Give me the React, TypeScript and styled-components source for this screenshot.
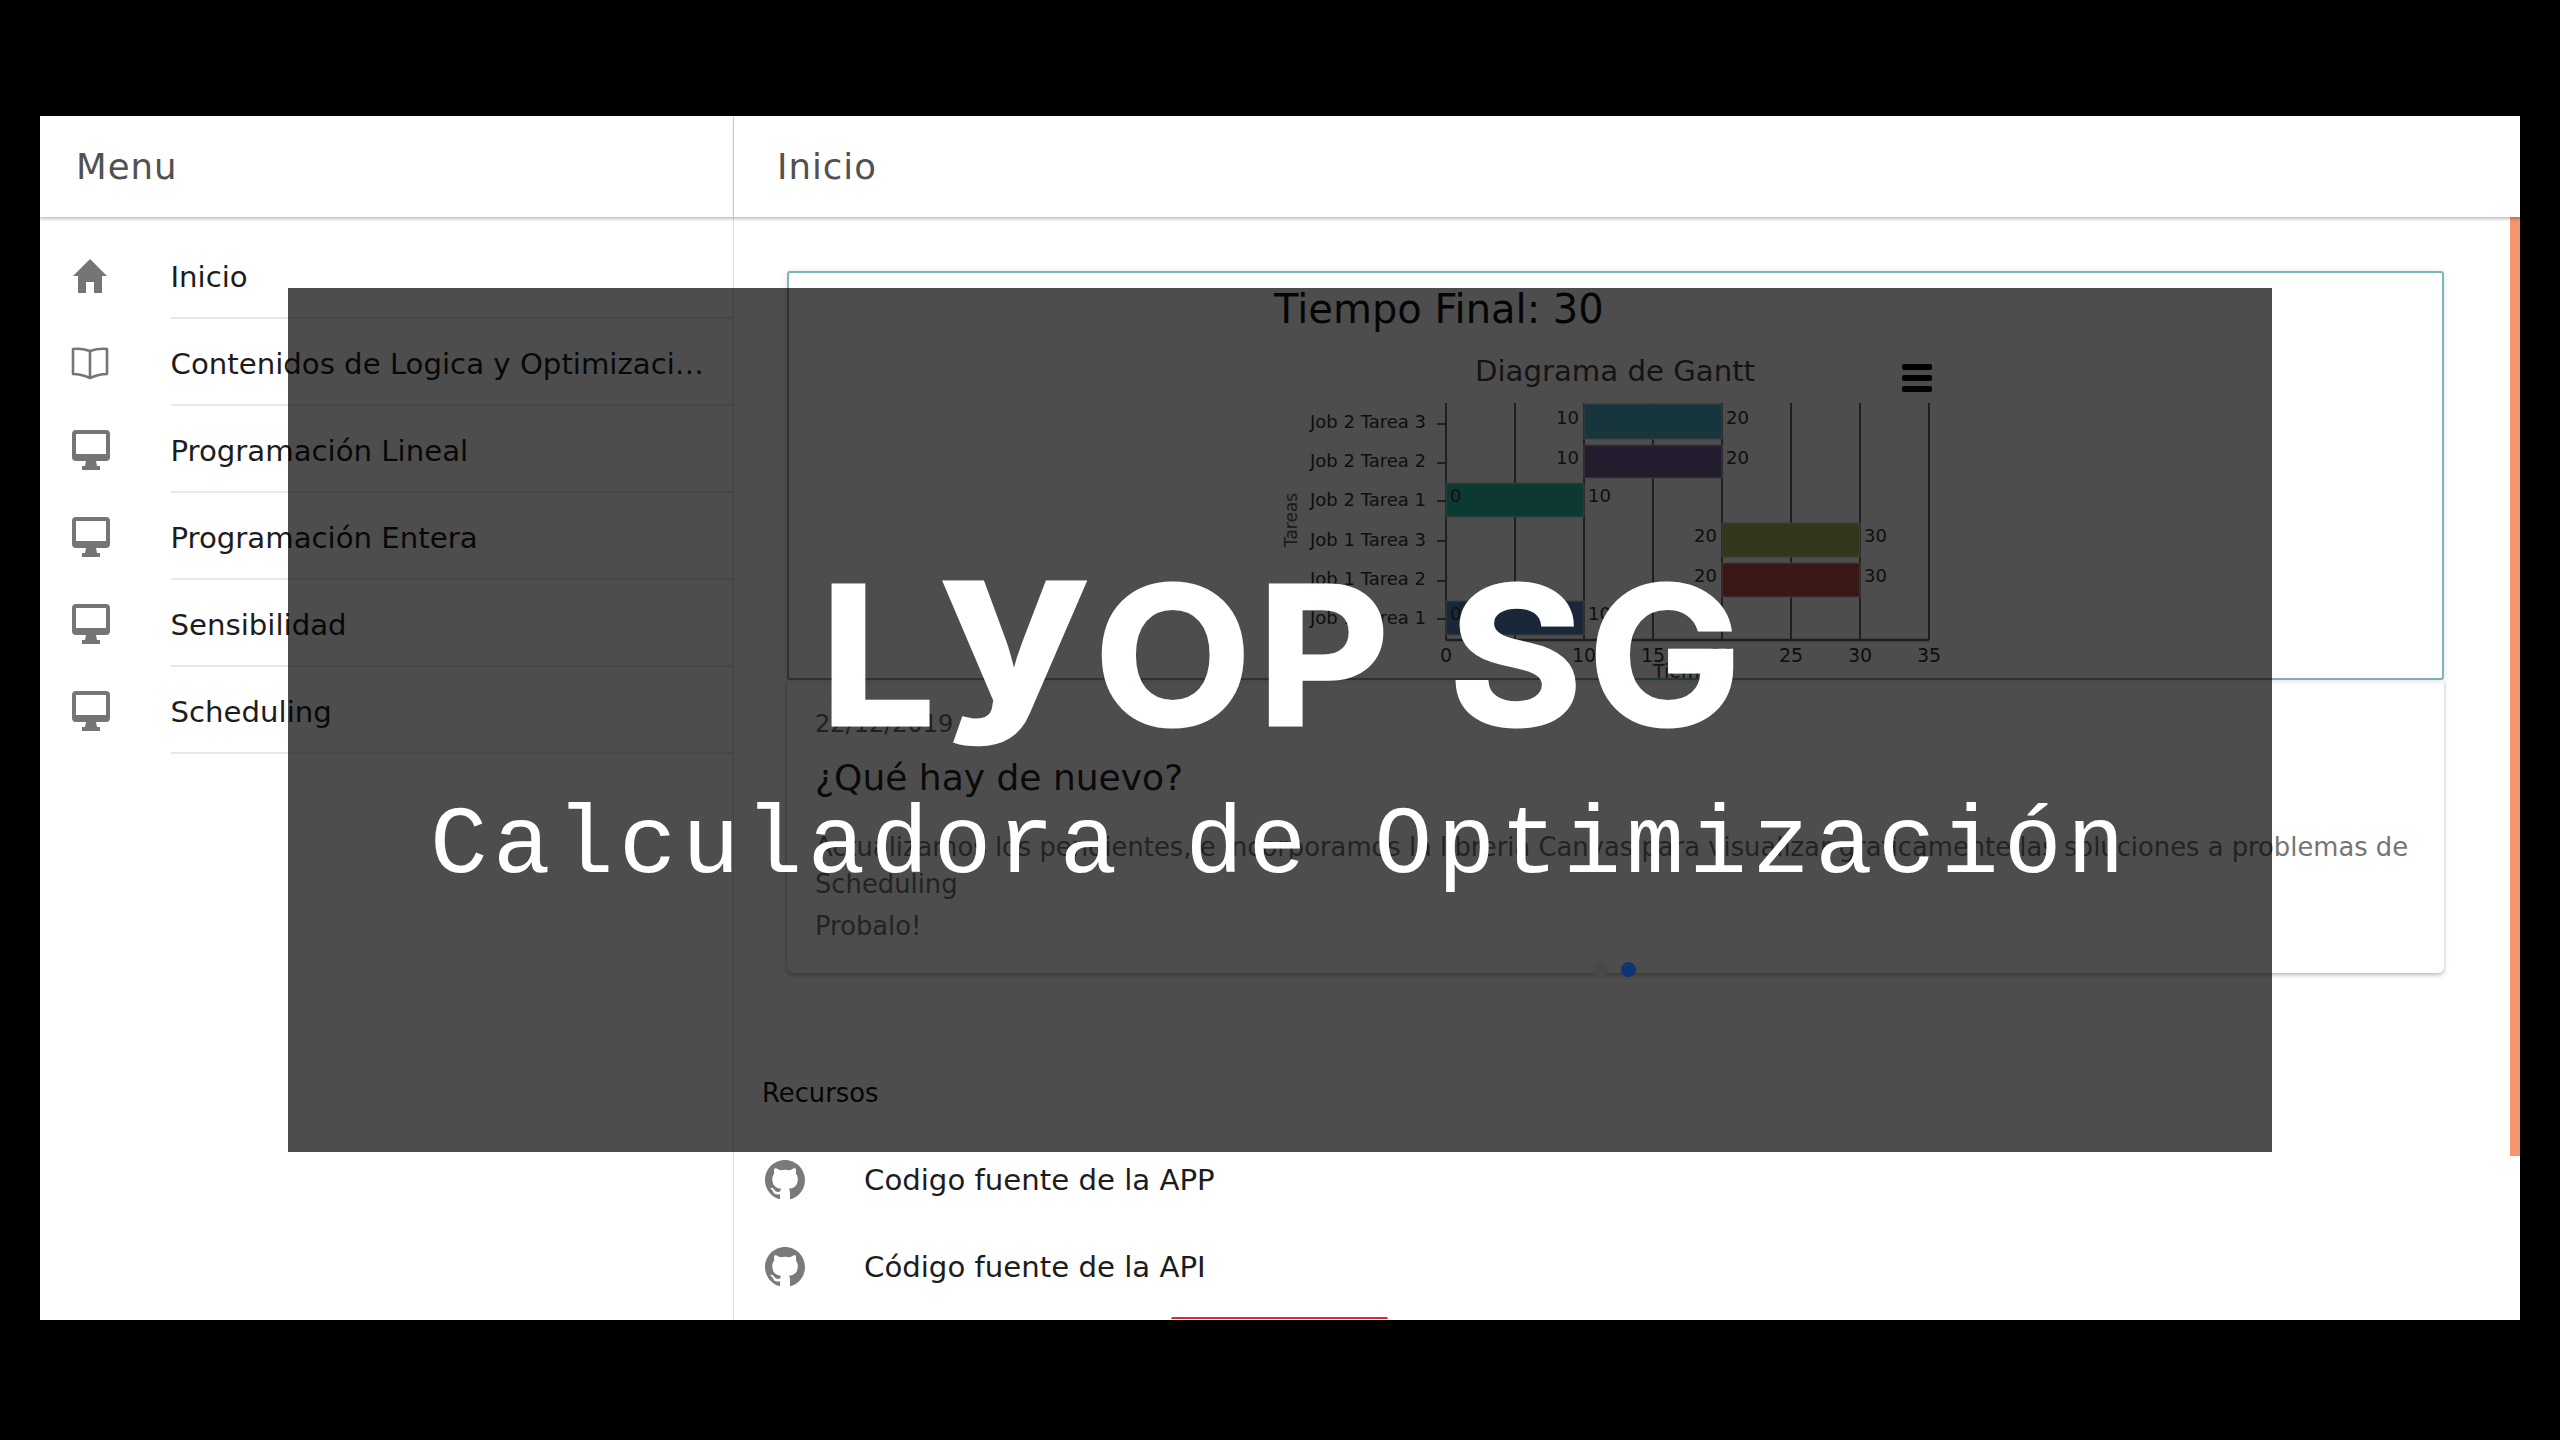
import React from 'react';
import styled, { createGlobalStyle } from 'styled-components';

const Global = createGlobalStyle`
  html, body { margin: 0; padding: 0; background: #000; }
  body { font-family: "DejaVu Sans", sans-serif; }
  * { box-sizing: border-box; }
`;

const Stage = styled.div`
  width: 2560px;
  height: 1440px;
  padding: 116px 40px 120px;
  background: #000;
  overflow: hidden;
`;
const Window = styled.div`
  position: relative;
  width: 2480px;
  height: 1204px;
  background: #fff;
  display: grid;
  grid-template-columns: 694px 1fr;
  grid-template-rows: 101px 1fr;
  overflow: hidden;
`;
const Bar = styled.header<{ $divided?: boolean; $pad: number }>`
  position: relative;
  z-index: 1;
  display: flex;
  align-items: center;
  padding-left: ${p => p.$pad}px;
  font-size: 35.5px;
  letter-spacing: 1px;
  color: #515151;
  background: #fff;
  box-shadow: 0 2px 3px rgba(0, 0, 0, 0.25);
  ${p => p.$divided ? 'border-right: 1px solid #e0e0e0;' : ''}
`;
const Side = styled.nav`
  border-right: 1px solid #e0e0e0;
  padding-top: 15px;
`;
const SideRow = styled.div`
  height: 87px;
  display: flex;
  align-items: center;
  padding-left: 31px;
`;
const IconCell = styled.span`
  flex: 0 0 99.5px;
  display: flex;
  align-items: center;
  color: #757575;
`;
const SideLabel = styled.div`
  flex: 1;
  height: 87px;
  line-height: 90px;
  border-bottom: 2px solid #e8e8e8;
  font-size: 29.2px;
  color: #1c1c1c;
  white-space: nowrap;
  overflow: hidden;
`;
const Clip = styled.span`
  display: block;
  width: 539px;
  overflow: hidden;
  text-overflow: ellipsis;
`;
const Main = styled.main`
  display: flex;
  min-height: 0;
  overflow: hidden;
`;
const Content = styled.div`
  flex: 1;
  min-width: 0;
  padding: 54px 66px 0 53px;
  display: flex;
  flex-direction: column;
`;
const Scroll = styled.div`
  flex: 0 0 10px;
  height: 939px;
  background: #f4956e;
`;
const ChartPanel = styled.section`
  height: 409px;
  border: 2px solid #7fb4b8;
  border-radius: 3px;
  box-shadow: 0 1px 6px rgba(0, 0, 0, 0.12);
  overflow: hidden;
`;
const ChartHeading = styled.h2`
  margin: 0;
  height: 62px;
  padding: 15px 0 0 485px;
  font-size: 40px;
  line-height: 42px;
  font-weight: 400;
  color: #111;
`;
const ChartSvg = styled.svg`
  display: block;
  font-family: "DejaVu Sans", sans-serif;
`;
const NewsCard = styled.article`
  position: relative;
  height: 293px;
  padding: 29px 28px 0;
  border-radius: 0 0 6px 6px;
  box-shadow: 0 2px 4px rgba(0, 0, 0, 0.28);
`;
const NewsDate = styled.div`
  font-size: 24px;
  line-height: 30px;
  color: #6a6a6a;
`;
const NewsTitle = styled.h3`
  margin: 15px 0 0;
  font-size: 36px;
  line-height: 48px;
  font-weight: 400;
  color: #222;
`;
const NewsText = styled.p<{ $gap: number }>`
  margin: ${p => p.$gap}px 0 0;
  font-size: 25.8px;
  line-height: 37px;
  color: #757575;
`;
const Dot = styled.span<{ $on?: boolean }>`
  position: absolute;
  z-index: ${p => p.$on ? 6 : 1};
  left: ${p => p.$on ? 834 : 806}px;
  bottom: -4px;
  width: 15px;
  height: 15px;
  border-radius: 50%;
  background: ${p => p.$on ? '#0f3670' : '#efefef'};
`;
const Resources = styled.div`
  margin-top: 92px;
`;
const ResTitle = styled.div`
  margin-left: -25px;
  height: 71px;
  line-height: 56px;
  font-size: 25.8px;
  color: #111;
`;
const ResRow = styled.div`
  margin-left: -25px;
  height: 87px;
  display: flex;
  align-items: center;
  font-size: 29.2px;
  color: #1c1c1c;
`;
const ResIcon = styled.span`
  flex: 0 0 102px;
  display: flex;
  padding-left: 3px;
  color: #7a7a7a;
`;
const RedEdge = styled.div`
  margin: 7px 0 0 384px;
  width: 217px;
  height: 2px;
  background: #d9263f;
  border-radius: 3px 3px 0 0;
`;
const Overlay = styled.div`
  position: absolute;
  z-index: 5;
  left: 248px;
  top: 172px;
  width: 1984px;
  height: 864px;
  background: rgba(0, 0, 0, 0.698);
  display: flex;
  flex-direction: column;
  align-items: center;
  color: #fff;
`;
const Brand = styled.h1`
  margin: 267px 0 0;
  height: 200px;
  font-family: Inter, sans-serif;
  font-weight: 700;
  font-size: 193px;
  line-height: 200px;
  letter-spacing: 5px;
  white-space: nowrap;
  -webkit-text-stroke: 3px #fff;
  transform: translateX(3px) scaleX(1.06);
`;
const BrandY = styled.span`
  display: inline-block;
  font-size: 232px;
  line-height: 0;
  transform: translateY(-19px) scaleY(0.93);
`;
const Tagline = styled.div`
  margin-top: 37px;
  font-family: "Liberation Mono", monospace;
  font-size: 96px;
  line-height: 110px;
  letter-spacing: 5.35px;
  white-space: nowrap;
`;

const Home = () => (
  <svg width="38" height="36" viewBox="0 0 38 36" fill="currentColor">
    <path d="M19 1 L36 18 L31 18 L31 35 L23 35 L23 24 L15 24 L15 35 L7 35 L7 18 L2 18 Z" />
  </svg>
);
const Book = () => (
  <svg width="38" height="34" viewBox="0 0 38 34" fill="none" stroke="currentColor" strokeWidth="2.6">
    <path d="M2 3 Q10 2 19 5 Q28 2 36 3 V28 Q28 28 19 32 Q10 28 2 28 Z M19 5 V32" strokeLinejoin="round" />
  </svg>
);
const Desktop = () => (
  <svg width="40" height="42" viewBox="0 0 40 42" fill="currentColor">
    <path fillRule="evenodd" d="M5 1 H35 Q39 1 39 5 V28 Q39 32 35 32 H25 L26 37 H29 V41 H11 V37 H14 L15 32 H5 Q1 32 1 28 V5 Q1 1 5 1 Z M5 5 V25 H35 V5 Z" />
  </svg>
);
const Github = () => (
  <svg width="40" height="40" viewBox="0 0 16 16" fill="currentColor">
    <path d="M8 0C3.58 0 0 3.58 0 8c0 3.54 2.29 6.53 5.47 7.59.4.07.55-.17.55-.38 0-.19-.01-.82-.01-1.49-2.01.37-2.53-.49-2.69-.94-.09-.23-.48-.94-.82-1.13-.28-.15-.68-.52-.01-.53.63-.01 1.08.58 1.23.82.72 1.21 1.87.87 2.33.66.07-.52.28-.87.51-1.07-1.78-.2-3.64-.89-3.64-3.95 0-.87.31-1.59.82-2.15-.08-.2-.36-1.02.08-2.12 0 0 .67-.21 2.2.82.64-.18 1.32-.27 2-.27.68 0 1.36.09 2 .27 1.53-1.04 2.2-.82 2.2-.82.44 1.1.16 1.92.08 2.12.51.56.82 1.27.82 2.15 0 3.07-1.87 3.75-3.65 3.95.29.25.54.73.54 1.48 0 1.07-.01 1.93-.01 2.2 0 .21.15.46.55.38A8.013 8.013 0 0016 8c0-4.42-3.58-8-8-8z" />
  </svg>
);

const sideItems: [React.ReactNode, string][] = [
  [<Home />, 'Inicio'],
  [<Book />, 'Contenidos de Logica y Optimización'],
  [<Desktop />, 'Programación Lineal'],
  [<Desktop />, 'Programación Entera'],
  [<Desktop />, 'Sensibilidad'],
  [<Desktop />, 'Scheduling'],
];

const x0 = 1446;
const unit = 13.8;
const bars = [
  { name: 'Job 2 Tarea 3', from: 10, to: 20, y: 404, h: 35, fill: '#4baec8', tick: 424, label: 421, value: 417 },
  { name: 'Job 2 Tarea 2', from: 10, to: 20, y: 445, h: 33, fill: '#795c9d', tick: 463, label: 460, value: 457 },
  { name: 'Job 2 Tarea 1', from: 0, to: 10, y: 483, h: 34, fill: '#2bbeaa', tick: 501, label: 499, value: 495 },
  { name: 'Job 1 Tarea 3', from: 20, to: 30, y: 523, h: 34, fill: '#a7bb5c', tick: 541, label: 539, value: 535 },
  { name: 'Job 1 Tarea 2', from: 20, to: 30, y: 563, h: 34, fill: '#be524b', tick: 581, label: 578, value: 575 },
  { name: 'Job 1 Tarea 1', from: 0, to: 10, y: 601, h: 34, fill: '#5580bb', tick: 619, label: 617, value: 613 },
];

const Gantt = () => (
  <ChartSvg width="1653" height="343" viewBox="789 335 1653 343">
    <text x="1615" y="381" fontSize="29.2" fill="#444" textAnchor="middle">Diagrama de Gantt</text>
    <rect x="1902" y="364" width="30" height="6" rx="2" fill="#000" />
    <rect x="1902" y="375" width="30" height="6" rx="2" fill="#000" />
    <rect x="1902" y="386" width="30" height="6" rx="2" fill="#000" />
    {[0, 5, 10, 15, 20, 25, 30, 35].map(v => (
      <g key={v}>
        <line x1={x0 + v * unit} x2={x0 + v * unit} y1="403" y2="640" stroke="#666" strokeWidth="2" />
        <text x={x0 + v * unit} y="662" fontSize="19" fill="#333" textAnchor="middle">{v}</text>
      </g>
    ))}
    <line x1={x0} x2="1929" y1="640" y2="640" stroke="#666" strokeWidth="2.5" />
    {bars.map(b => {
      const left = x0 + b.from * unit;
      const right = x0 + b.to * unit;
      return (
        <g key={b.name}>
          <rect x={left} y={b.y} width={right - left} height={b.h} fill={b.fill} stroke="#ccc" strokeWidth="1" />
          <line x1="1437" x2={x0} y1={b.tick} y2={b.tick} stroke="#666" strokeWidth="2" />
          <text x="1426" y={b.label + 7} fontSize="18" fill="#333" textAnchor="end">{b.name}</text>
          <text x={b.from === 0 ? left + 4 : left - 5} y={b.value + 7} fontSize="18" fill="#333" textAnchor={b.from === 0 ? 'start' : 'end'}>{b.from}</text>
          <text x={right + 4} y={b.value + 7} fontSize="18" fill="#333">{b.to}</text>
        </g>
      );
    })}
    <text transform="translate(1297 520) rotate(-90)" fontSize="17" fill="#555" textAnchor="middle">Tareas</text>
    <text x="1653" y="678" fontSize="19" fill="#444">Tiempo</text>
  </ChartSvg>
);

export default function App() {
  return (
    <Stage>
      <Global />
      <Window>
        <Bar $divided $pad={36}>Menu</Bar>
        <Bar $pad={43}>Inicio</Bar>
        <Side>
          {sideItems.map(([icon, text]) => (
            <SideRow key={text}>
              <IconCell>{icon}</IconCell>
              <SideLabel><Clip>{text}</Clip></SideLabel>
            </SideRow>
          ))}
        </Side>
        <Main>
          <Content>
            <ChartPanel>
              <ChartHeading>Tiempo Final: 30</ChartHeading>
              <Gantt />
            </ChartPanel>
            <NewsCard>
              <NewsDate>22/12/2019</NewsDate>
              <NewsTitle>¿Qué hay de nuevo?</NewsTitle>
              <NewsText $gap={27}>Actualizamos los pendientes, e incorporamos la libreria Canvas para visualizar graficamente las soluciones a problemas de Scheduling</NewsText>
              <NewsText $gap={5}>Probalo!</NewsText>
              <Dot />
              <Dot $on />
            </NewsCard>
            <Resources>
              <ResTitle>Recursos</ResTitle>
              <ResRow><ResIcon><Github /></ResIcon>Codigo fuente de la APP</ResRow>
              <ResRow><ResIcon><Github /></ResIcon>Código fuente de la API</ResRow>
              <RedEdge />
            </Resources>
          </Content>
          <Scroll />
        </Main>
        <Overlay>
          <Brand>L<BrandY>y</BrandY>OP SG</Brand>
          <Tagline>Calculadora de Optimización</Tagline>
        </Overlay>
      </Window>
    </Stage>
  );
}
